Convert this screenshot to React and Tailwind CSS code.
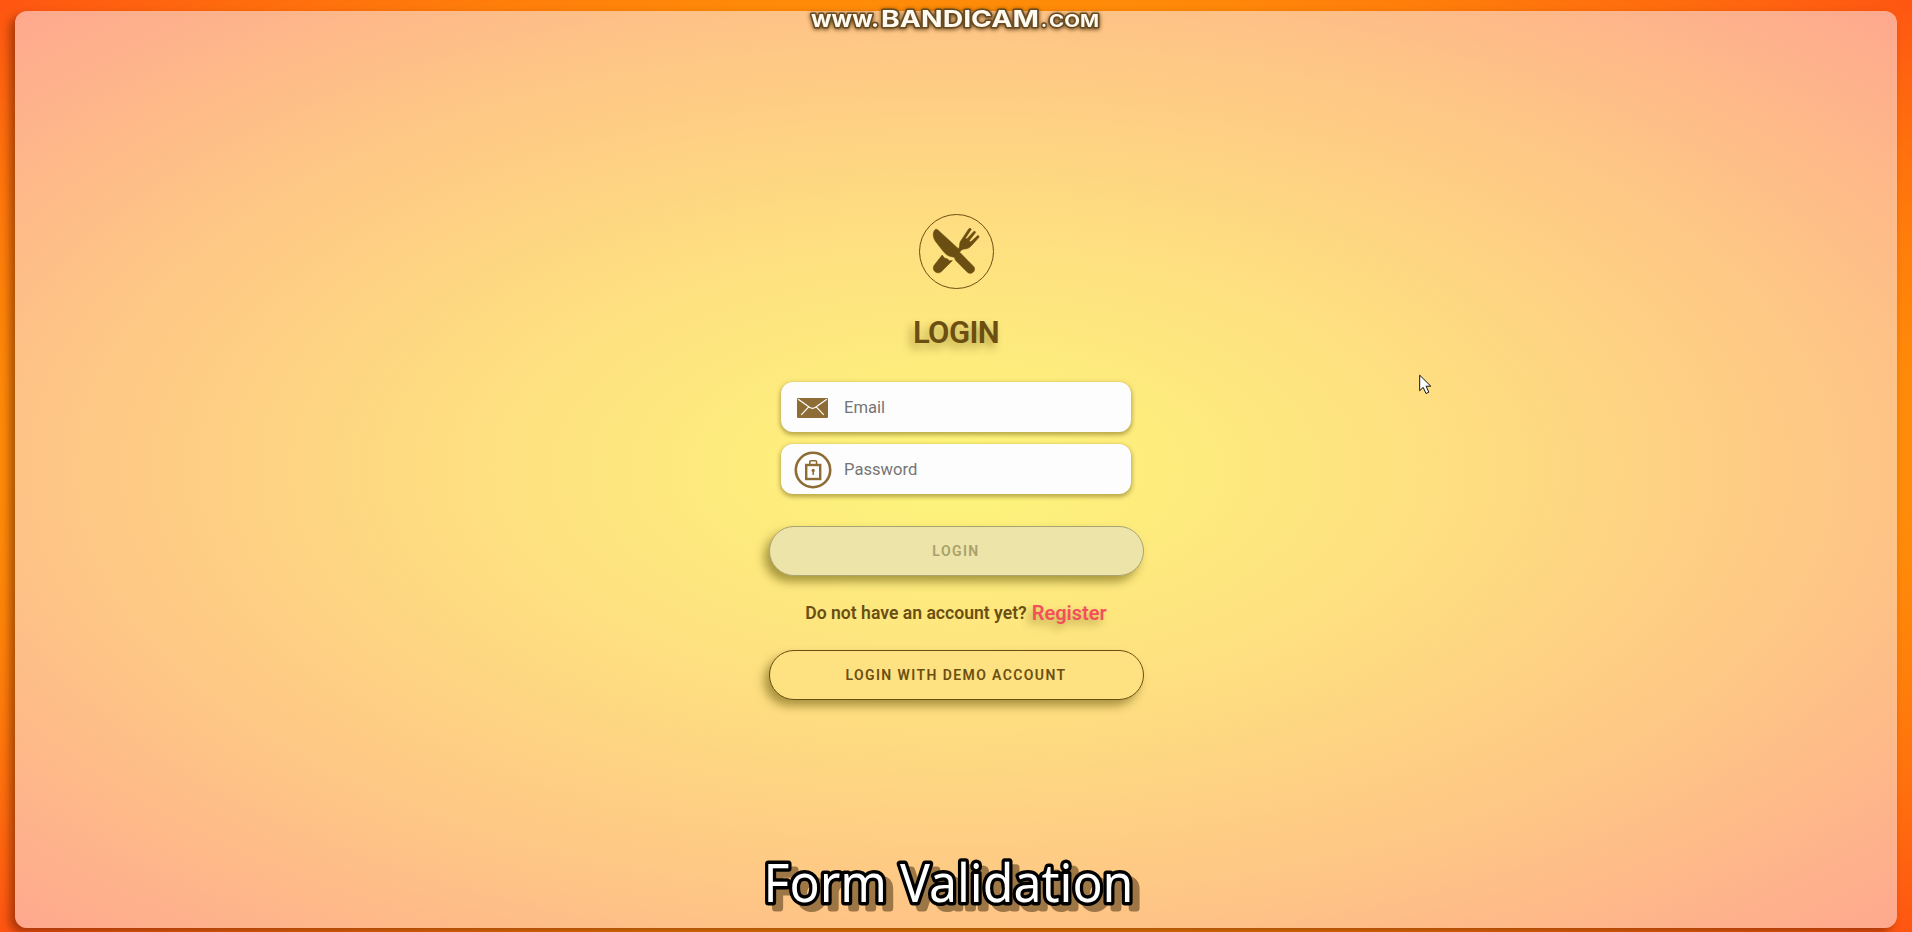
import React from "react";

function Cutlery() {
  return (
    <svg viewBox="0.6 0.6 75 75" className="h-[75px] w-[75px] shrink-0" fill="#6b4e12" stroke="#6b4e12" strokeWidth="0.6">
      <path d="M17 16C18 15.4 19.4 16.4 20.6 17.6L40 35.4C41 34.4 41.2 32.8 41.2 31.4C41.3 29.6 41.8 28 43 26.6L50.4 15.4Q51.8 14.2 52.9 15.9L47.2 24.6L48.4 25.7L55.4 18Q57 17.4 57.2 19.2L50.9 27.2L52.2 28.5L59.3 22.2Q61 22.2 60.6 23.9L53.6 31.6C51.6 34.2 48.8 35.6 46 35.6C43.8 35.6 42.4 37 41.2 38.8L55.2 53C58.4 56.8 53.4 62.2 49.2 59L37.6 47.4C36.4 46.2 36.8 45 35.8 43.8L32 43C29 42.4 26.4 40 24.4 37.4L17 27.8C14.2 23.8 14 18.4 17 16Z" />
      <path d="M23.8 41.6L26 44.6L29.2 45.6L31 47.4L34 47.2L22.8 58.4C18.6 61.8 12.6 56.4 15.8 51.8Z" />
    </svg>
  );
}

function Envelope() {
  return (
    <svg viewBox="0 0 31 20" className="mt-[1px] h-5 w-[31px]">
      <rect x="0" y="0" width="31" height="20" rx="1.2" fill="#8d6c35" />
      <path d="M1.2 1.2L12.5 9.3Q15.5 11.3 18.5 9.3L29.8 1.2M4.2 16.8L11.5 9.2M26.8 16.8L19.5 9.2" fill="none" stroke="#fff" strokeWidth="1.2" />
    </svg>
  );
}

function Lock() {
  return (
    <svg viewBox="0 0 38 38" className="mt-[2px] h-[38px] w-[38px]" fill="none" stroke="#8d6c35">
      <circle cx="19" cy="19" r="17.2" strokeWidth="2.6" />
      <rect x="12.2" y="14" width="14" height="14" strokeWidth="2.4" />
      <path d="M15.8 13.5V10.8Q15.8 9.7 16.9 9.7H21.5Q22.6 9.7 22.6 10.8V13.5" strokeWidth="1.6" />
      <circle cx="19.2" cy="19.4" r="1.6" fill="#8d6c35" stroke="none" />
      <path d="M19.2 19.5V24" strokeWidth="1.5" />
    </svg>
  );
}

function Field({ icon, label, type }) {
  return (
    <label className="flex h-[50px] w-[350px] items-center rounded-[12px] bg-[#fdfdfd] shadow-[0_2px_4px_1px_rgba(90,75,0,0.42)]">
      <span className="flex w-[63px] shrink-0 justify-center">{icon}</span>
      <input
        type={type}
        placeholder={label}
        className="h-full min-w-0 flex-1 bg-transparent text-[16.6px] text-[#666] outline-none placeholder:text-[#757575]"
      />
    </label>
  );
}

function Watermark() {
  const parts = [
    ["www.", 811, 68, 23],
    ["BANDICAM", 881, 158, 23.5],
    [".", 1041, 6, 20],
    ["COM", 1049, 50, 17.5],
  ];
  return (
    <svg className="pointer-events-none absolute left-0 top-0 h-10 w-[1200px]" viewBox="0 0 1200 40">
      <g
        fontFamily="Inter, sans-serif"
        fontWeight="700"
        fill="#fffaf0"
        stroke="#684a20"
        strokeWidth="3"
        strokeLinejoin="round"
        paintOrder="stroke"
        className="drop-shadow-[0_1px_2px_rgba(60,35,0,0.8)]"
      >
        {parts.map(([text, x, width, size]) => (
          <text key={x} x={x} y="27" fontSize={size} textLength={width} lengthAdjust="spacingAndGlyphs">
            {text}
          </text>
        ))}
      </g>
    </svg>
  );
}

function Caption() {
  return (
    <svg
      className="pointer-events-none absolute bottom-0 left-0 h-[100px] w-[1200px] drop-shadow-[7px_6px_0_rgba(60,38,5,0.5)]"
      viewBox="0 0 1200 100"
    >
      <text
        x="763.5"
        y="70"
        fontFamily="'Noto Sans', sans-serif"
        fontSize="53"
        textLength="370"
        lengthAdjust="spacingAndGlyphs"
        fill="#fff"
        stroke="#000"
        strokeWidth="7"
        strokeLinejoin="round"
        paintOrder="stroke"
      >
        Form Validation
      </text>
    </svg>
  );
}

export default function App() {
  return (
    <div className="relative h-[932px] w-[1912px] overflow-hidden bg-[radial-gradient(ellipse_at_center,#ffee00_0%,#ff8c08_70%,#ff5512_100%)] pt-[11px] pr-[15px] pb-1 pl-[15px] font-['Roboto',sans-serif]">
      <main className="flex h-[917px] flex-col items-center rounded-[12px] bg-[radial-gradient(ellipse_at_center,#fdf67b_0%,#fee080_35%,#fec486_70%,#fea88e_100%)] pt-[203px] text-[#6b4e12] shadow-[-5px_5px_10px_rgba(80,20,0,0.5)]">
        <div className="flex h-[75px] w-[75px] items-center justify-center rounded-full border border-[#6b4e12]">
          <Cutlery />
        </div>
        <h1 className="mt-6 text-[31px] leading-10 font-semibold tracking-[-0.6px] [text-shadow:-4px_5px_8px_rgba(90,75,0,0.45)]">LOGIN</h1>
        <form className="mt-[29px] flex flex-col items-center" onSubmit={(e) => e.preventDefault()}>
          <div className="flex flex-col gap-3">
            <Field type="email" label="Email" icon={<Envelope />} />
            <Field type="password" label="Password" icon={<Lock />} />
          </div>
          <button
            disabled
            className="mt-8 h-[50px] w-[375px] rounded-full border border-[#aaa471] bg-[#ece4a8] pt-px text-[14px] font-semibold tracking-[1.4px] text-[#aaa06b] shadow-[-5px_6px_10px_rgba(90,75,0,0.5)]"
          >
            LOGIN
          </button>
        </form>
        <p className="mt-[22px] flex h-[30px] items-center gap-[5px] text-[17.6px] font-semibold">
          Do not have an account yet?
          <a className="text-[20px] text-[#f4505a] [text-shadow:-4px_5px_8px_rgba(90,75,0,0.4)]">Register</a>
        </p>
        <button className="mt-[22px] h-[50px] w-[375px] rounded-full border border-[#6b4e12] bg-[#fee180] pt-px text-[14px] font-semibold tracking-[1.4px] shadow-[-5px_6px_10px_rgba(90,75,0,0.5)]">
          LOGIN WITH DEMO ACCOUNT
        </button>
      </main>
      <Watermark />
      <Caption />
      <svg className="pointer-events-none absolute left-[1419px] top-[374px] h-[22px] w-[14px]" viewBox="0 0 14 22">
        <path d="M.7 1.2V16.7L4.2 13.4L7 19.5L9.8 18.2L7.1 12.2H11.8Z" fill="#fff" stroke="#111" strokeWidth="1" />
      </svg>
    </div>
  );
}
